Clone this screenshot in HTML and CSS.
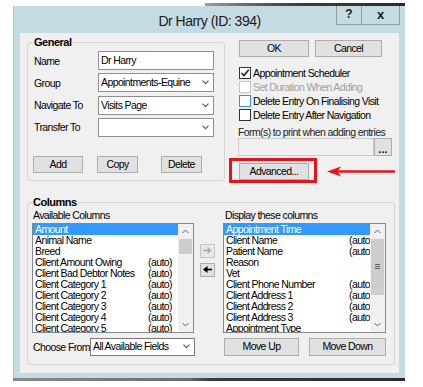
FILE: index.html
```html
<!DOCTYPE html>
<html lang="en">
<head>
    <meta charset="UTF-8">
    <meta name="viewport" content="width=device-width, initial-scale=1.0">
    <title>Dr Harry (ID: 394)</title>
    <link rel="stylesheet" href="styles.css">
</head>
<body>
    <div class="backdrop-top"></div>
    <div class="window">
        <div class="titlebar">
            <span class="title">Dr Harry (ID: 394)</span>
            <div class="caption-buttons">
                <span class="cap-btn help">?</span>
                <span class="cap-btn close">x</span>
            </div>
        </div>

        <div class="client">
            <div class="top-row">
                <fieldset class="group general">
                    <legend>General</legend>
                    <div class="fields">
                        <div class="field">
                            <label>Name</label>
                            <div class="textbox">Dr Harry</div>
                        </div>
                        <div class="field">
                            <label>Group</label>
                            <div class="textbox combo">
                                <span>Appointments-Equine</span>
                                <svg width="7" height="5" viewBox="0 0 7 5"><path d="M0.5 0.7 L3.5 3.7 L6.5 0.7" fill="none" stroke="#555" stroke-width="1.1"/></svg>
                            </div>
                        </div>
                        <div class="field">
                            <label>Navigate To</label>
                            <div class="textbox combo">
                                <span>Visits Page</span>
                                <svg width="7" height="5" viewBox="0 0 7 5"><path d="M0.5 0.7 L3.5 3.7 L6.5 0.7" fill="none" stroke="#555" stroke-width="1.1"/></svg>
                            </div>
                        </div>
                        <div class="field">
                            <label>Transfer To</label>
                            <div class="textbox combo">
                                <span></span>
                                <svg width="7" height="5" viewBox="0 0 7 5"><path d="M0.5 0.7 L3.5 3.7 L6.5 0.7" fill="none" stroke="#555" stroke-width="1.1"/></svg>
                            </div>
                        </div>
                    </div>
                    <div class="button-row">
                        <button class="btn btn-add">Add</button>
                        <button class="btn btn-copy">Copy</button>
                        <button class="btn btn-delete">Delete</button>
                    </div>
                </fieldset>

                <div class="side">
                    <div class="dialog-buttons">
                        <button class="btn btn-ok">OK</button>
                        <button class="btn btn-cancel">Cancel</button>
                    </div>
                    <div class="checks">
                        <div class="check">
                            <span class="box"><svg width="10" height="10" viewBox="0 0 10 10"><path d="M1.5 5 L4 7.6 L8.8 1.8" fill="none" stroke="#222" stroke-width="1.6"/></svg></span>
                            Appointment Scheduler
                        </div>
                        <div class="check disabled">
                            <span class="box"></span>
                            Set Duration When Adding
                        </div>
                        <div class="check hover">
                            <span class="box"></span>
                            Delete Entry On Finalising Visit
                        </div>
                        <div class="check">
                            <span class="box"></span>
                            Delete Entry After Navigation
                        </div>
                    </div>
                    <div class="forms-label">Form(s) to print when adding entries</div>
                    <div class="forms-row">
                        <div class="forms-box"></div>
                        <button class="btn btn-dots">...</button>
                    </div>
                    <div class="advanced-wrap">
                        <button class="btn btn-advanced">Advanced...</button>
                        <span class="highlight"></span>
                        <svg class="pointer" width="68" height="11" viewBox="0 0 68 11">
                            <path d="M8 5.5 L68 5.5" stroke="#e3141b" stroke-width="2.4"/>
                            <polygon points="0,5.5 14,0.5 10.5,5.5 14,10.5" fill="#e3141b"/>
                        </svg>
                    </div>
                </div>
            </div>

            <fieldset class="group columns">
                <legend>Columns</legend>
                <div class="columns-grid">
                    <div class="col-label">Available Columns</div>
                    <div></div>
                    <div class="col-label right">Display these columns</div>

                    <div class="listbox available">
                        <div class="items">
                            <div class="item selected"><span class="name">Amount</span></div>
                            <div class="item"><span class="name">Animal Name</span></div>
                            <div class="item"><span class="name">Breed</span></div>
                            <div class="item"><span class="name">Client Amount Owing</span><span>(auto)</span></div>
                            <div class="item"><span class="name">Client Bad Debtor Notes</span><span>(auto)</span></div>
                            <div class="item"><span class="name">Client Category 1</span><span>(auto)</span></div>
                            <div class="item"><span class="name">Client Category 2</span><span>(auto)</span></div>
                            <div class="item"><span class="name">Client Category 3</span><span>(auto)</span></div>
                            <div class="item"><span class="name">Client Category 4</span><span>(auto)</span></div>
                            <div class="item"><span class="name">Client Category 5</span><span>(auto)</span></div>
                        </div>
                        <div class="scrollbar">
                            <div class="sb-arrow"><svg width="7" height="5" viewBox="0 0 7 5"><path d="M0.5 4 L3.5 1 L6.5 4" fill="none" stroke="#606060" stroke-width="1"/></svg></div>
                            <div class="sb-track">
                                <div class="sb-thumb small"></div>
                            </div>
                            <div class="sb-arrow"><svg width="7" height="5" viewBox="0 0 7 5"><path d="M0.5 1 L3.5 4 L6.5 1" fill="none" stroke="#606060" stroke-width="1"/></svg></div>
                        </div>
                    </div>

                    <div class="move-buttons">
                        <button class="move-btn disabled">
                            <svg width="9" height="7" viewBox="0 0 9 7"><path d="M0 3.5 L7 3.5 M4.5 0.8 L7.5 3.5 L4.5 6.2" fill="none" stroke="#a8a8a8" stroke-width="1.3"/></svg>
                        </button>
                        <button class="move-btn">
                            <svg width="9" height="7" viewBox="0 0 9 7"><path d="M9 3.5 L1.5 3.5" stroke="#000" stroke-width="1.6"/><polygon points="0,3.5 4.5,0 4.5,7" fill="#000"/></svg>
                        </button>
                    </div>

                    <div class="listbox display">
                        <div class="items">
                            <div class="item selected"><span class="name">Appointment Time</span></div>
                            <div class="item"><span class="name">Client Name</span><span>(auto)</span></div>
                            <div class="item"><span class="name">Patient Name</span><span>(auto)</span></div>
                            <div class="item"><span class="name">Reason</span></div>
                            <div class="item"><span class="name">Vet</span></div>
                            <div class="item"><span class="name">Client Phone Number</span><span>(auto)</span></div>
                            <div class="item"><span class="name">Client Address 1</span><span>(auto)</span></div>
                            <div class="item"><span class="name">Client Address 2</span><span>(auto)</span></div>
                            <div class="item"><span class="name">Client Address 3</span><span>(auto)</span></div>
                            <div class="item"><span class="name">Appointment Type</span></div>
                        </div>
                        <div class="scrollbar">
                            <div class="sb-arrow"><svg width="7" height="5" viewBox="0 0 7 5"><path d="M0.5 4 L3.5 1 L6.5 4" fill="none" stroke="#606060" stroke-width="1"/></svg></div>
                            <div class="sb-track">
                                <div class="sb-thumb large"><span class="grip"></span></div>
                            </div>
                            <div class="sb-arrow"><svg width="7" height="5" viewBox="0 0 7 5"><path d="M0.5 1 L3.5 4 L6.5 1" fill="none" stroke="#606060" stroke-width="1"/></svg></div>
                        </div>
                    </div>

                    <div class="choose-row">
                        <span class="choose-label">Choose From</span>
                        <div class="textbox combo choose">
                            <span>All Available Fields</span>
                            <svg width="7" height="5" viewBox="0 0 7 5"><path d="M0.5 0.7 L3.5 3.7 L6.5 0.7" fill="none" stroke="#555" stroke-width="1.1"/></svg>
                        </div>
                    </div>
                    <div></div>
                    <div class="order-row">
                        <button class="btn btn-up">Move Up</button>
                        <button class="btn btn-down">Move Down</button>
                    </div>
                </div>
            </fieldset>
        </div>
    </div>
    <div class="backdrop-bottom"></div>
</body>
</html>
```

FILE: styles.css
```css
body {
    margin: 0;
    background-color: #ffffff;
    color: #000000;
    font-family: "Liberation Sans", Arial, sans-serif;
    font-size: 10.5px;
    letter-spacing: -0.6px;
}
.backdrop-top {
    margin: 3px 0 0 205px;
    width: 200px;
    height: 3px;
    background: linear-gradient(90deg, #a39c9a 0%, #6e6666 22%, #3e3d40 45%, #2c2c2e 100%);
}
.backdrop-bottom {
    margin-left: 13px;
    width: 392px;
    height: 3px;
    background: linear-gradient(90deg, #8a8a8a 0%, #6a6a6a 45%, #3a3a3c 50%, #2c2c2e 100%);
}
.window {
    position: relative;
    margin-left: 13px;
    width: 392px;
    height: 372px;
    box-sizing: border-box;
    background-color: #c4dbe4;
    border-left: 1px solid #a9c0c9;
    padding: 0 6px 5px 6px;
    display: flex;
    flex-direction: column;
}
.titlebar {
    height: 27px;
    box-sizing: border-box;
    padding-top: 4px;
    text-align: center;
    font-size: 14px;
    line-height: 22px;
    letter-spacing: -0.5px;
    color: #1a1a1a;
}
.caption-buttons {
    position: absolute;
    top: 0;
    right: 5px;
    display: flex;
    border-left: 1px solid #8e9ea5;
    font-weight: bold;
    letter-spacing: 0;
}
.cap-btn {
    height: 18px;
    line-height: 17px;
    border-right: 1px solid #8e9ea5;
    border-bottom: 1px solid #8e9ea5;
    text-align: center;
}
.help {
    width: 24px;
    font-size: 12px;
}
.close {
    width: 37px;
    font-size: 13px;
}
.client {
    flex: 1;
    background-color: #f0f0f0;
    padding: 3px 4px 0 7px;
}
.top-row {
    display: flex;
    gap: 13px;
}
.group {
    margin: 0;
    min-width: 0;
    box-sizing: border-box;
    border: 1px solid #d5d5d5;
    border-radius: 3px;
}
.group legend {
    padding: 0 1px;
    font-weight: bold;
    font-size: 11px;
    line-height: 13px;
    letter-spacing: -0.5px;
}
.general {
    width: 198px;
    padding: 2px 10px 7px 5px;
}
.fields {
    display: flex;
    flex-direction: column;
    gap: 3.3px;
}
.field {
    display: flex;
    align-items: center;
    height: 19px;
}
.field label {
    width: 65px;
    padding-left: 1px;
    box-sizing: border-box;
}
.textbox {
    width: 116px;
    height: 19px;
    box-sizing: border-box;
    border: 1px solid #8f8f8f;
    background-color: #ffffff;
    padding: 0 4px 0 2px;
    line-height: 17px;
    white-space: nowrap;
}
.combo {
    display: flex;
    align-items: center;
    justify-content: space-between;
}
.btn {
    height: 17px;
    box-sizing: border-box;
    border: 1px solid #adadad;
    background-color: #e1e1e1;
    padding: 0;
    font: inherit;
    letter-spacing: inherit;
    color: #000000;
    line-height: 15px;
    text-align: center;
}
.button-row {
    display: flex;
    margin-top: 19px;
}
.btn-add {
    width: 50px;
}
.btn-copy {
    width: 41px;
    margin-left: 14px;
}
.btn-delete {
    width: 41px;
    margin-left: 23px;
}
.side {
    width: 154px;
    padding-top: 4px;
    white-space: nowrap;
}
.dialog-buttons {
    display: flex;
    gap: 6px;
    padding-left: 1px;
}
.btn-ok {
    width: 70px;
}
.btn-cancel {
    width: 67px;
}
.checks {
    margin-top: 8.5px;
}
.check {
    display: flex;
    align-items: center;
    height: 14px;
    padding-left: 1px;
}
.box {
    width: 12px;
    height: 12px;
    box-sizing: border-box;
    border: 1px solid #333333;
    background-color: #ffffff;
    margin-right: 2px;
    display: flex;
    align-items: center;
    justify-content: center;
}
.check.disabled {
    color: #a0a0a0;
}
.check.disabled .box {
    border-color: #c6c6c6;
}
.check.hover .box {
    border-color: #3c8fd8;
}
.forms-label {
    margin-top: 4.5px;
    line-height: 12px;
    color: #222222;
}
.forms-row {
    display: flex;
    height: 18px;
}
.forms-box {
    width: 136px;
    box-sizing: border-box;
    border: 1px solid #cccccc;
    background-color: #f0f0f0;
}
.btn-dots {
    width: 18px;
    height: 18px;
    font-weight: bold;
    line-height: 20px;
    letter-spacing: 0.3px;
}
.advanced-wrap {
    position: relative;
    display: inline-block;
    margin: 7px 0 0 1px;
}
.btn-advanced {
    display: block;
    width: 70px;
}
.highlight {
    position: absolute;
    left: -10px;
    right: -8px;
    top: -5px;
    bottom: -3px;
    border: 3px solid #e3141b;
}
.pointer {
    position: absolute;
    left: 88px;
    top: 3px;
}
.columns {
    width: 368px;
    margin-top: 15px;
    padding: 0 8px 8px 4px;
}
.columns-grid {
    display: grid;
    grid-template-columns: 162px 29px 163px;
}
.col-label {
    line-height: 12px;
    margin-bottom: 2px;
    padding-left: 1px;
}
.col-label.right {
    padding-left: 2px;
}
.listbox {
    display: flex;
    height: 110px;
    box-sizing: border-box;
    border: 1px solid #828790;
    background-color: #ffffff;
}
.items {
    flex: 1;
    overflow: hidden;
}
.item {
    display: flex;
    height: 11px;
    line-height: 11px;
    padding-left: 2px;
    white-space: nowrap;
}
.item.selected {
    background-color: #3399ff;
    color: #ffffff;
}
.available .name {
    flex: 0 0 113px;
}
.display .name {
    flex: 0 0 123px;
}
.scrollbar {
    width: 15px;
    display: flex;
    flex-direction: column;
    background-color: #f0f0f0;
}
.sb-arrow {
    height: 15px;
    display: flex;
    align-items: center;
    justify-content: center;
}
.sb-track {
    flex: 1;
}
.sb-thumb {
    margin: 0 1px;
    background-color: #cdcdcd;
}
.sb-thumb.small {
    height: 15px;
}
.sb-thumb.large {
    height: 56px;
    display: flex;
    align-items: center;
    justify-content: center;
}
.grip {
    width: 5px;
    height: 5px;
    border-top: 1px solid #606060;
    border-bottom: 1px solid #606060;
    background: linear-gradient(#606060, #606060) center / 5px 1px no-repeat;
    box-sizing: border-box;
}
.move-buttons {
    display: flex;
    flex-direction: column;
    gap: 5px;
    padding: 21px 0 0 6px;
}
.move-btn {
    width: 15px;
    height: 14px;
    box-sizing: border-box;
    padding: 0;
    border: 1px solid #adadad;
    background-color: #e1e1e1;
    display: flex;
    align-items: center;
    justify-content: center;
}
.move-btn.disabled {
    border-color: #c4c4c4;
    background-color: #e8e8e8;
}
.choose-row {
    display: flex;
    align-items: center;
    margin-top: 5px;
    white-space: nowrap;
}
.choose-label {
    width: 58px;
    padding-left: 1px;
    box-sizing: border-box;
}
.textbox.choose {
    width: 105px;
    height: 18px;
    flex-shrink: 0;
    border-color: #7a7a7a;
}
.order-row {
    display: flex;
    gap: 10px;
    margin-top: 5px;
    padding-left: 1px;
}
.btn-up {
    width: 75px;
    height: 18px;
}
.btn-down {
    width: 77px;
    height: 18px;
}
```
